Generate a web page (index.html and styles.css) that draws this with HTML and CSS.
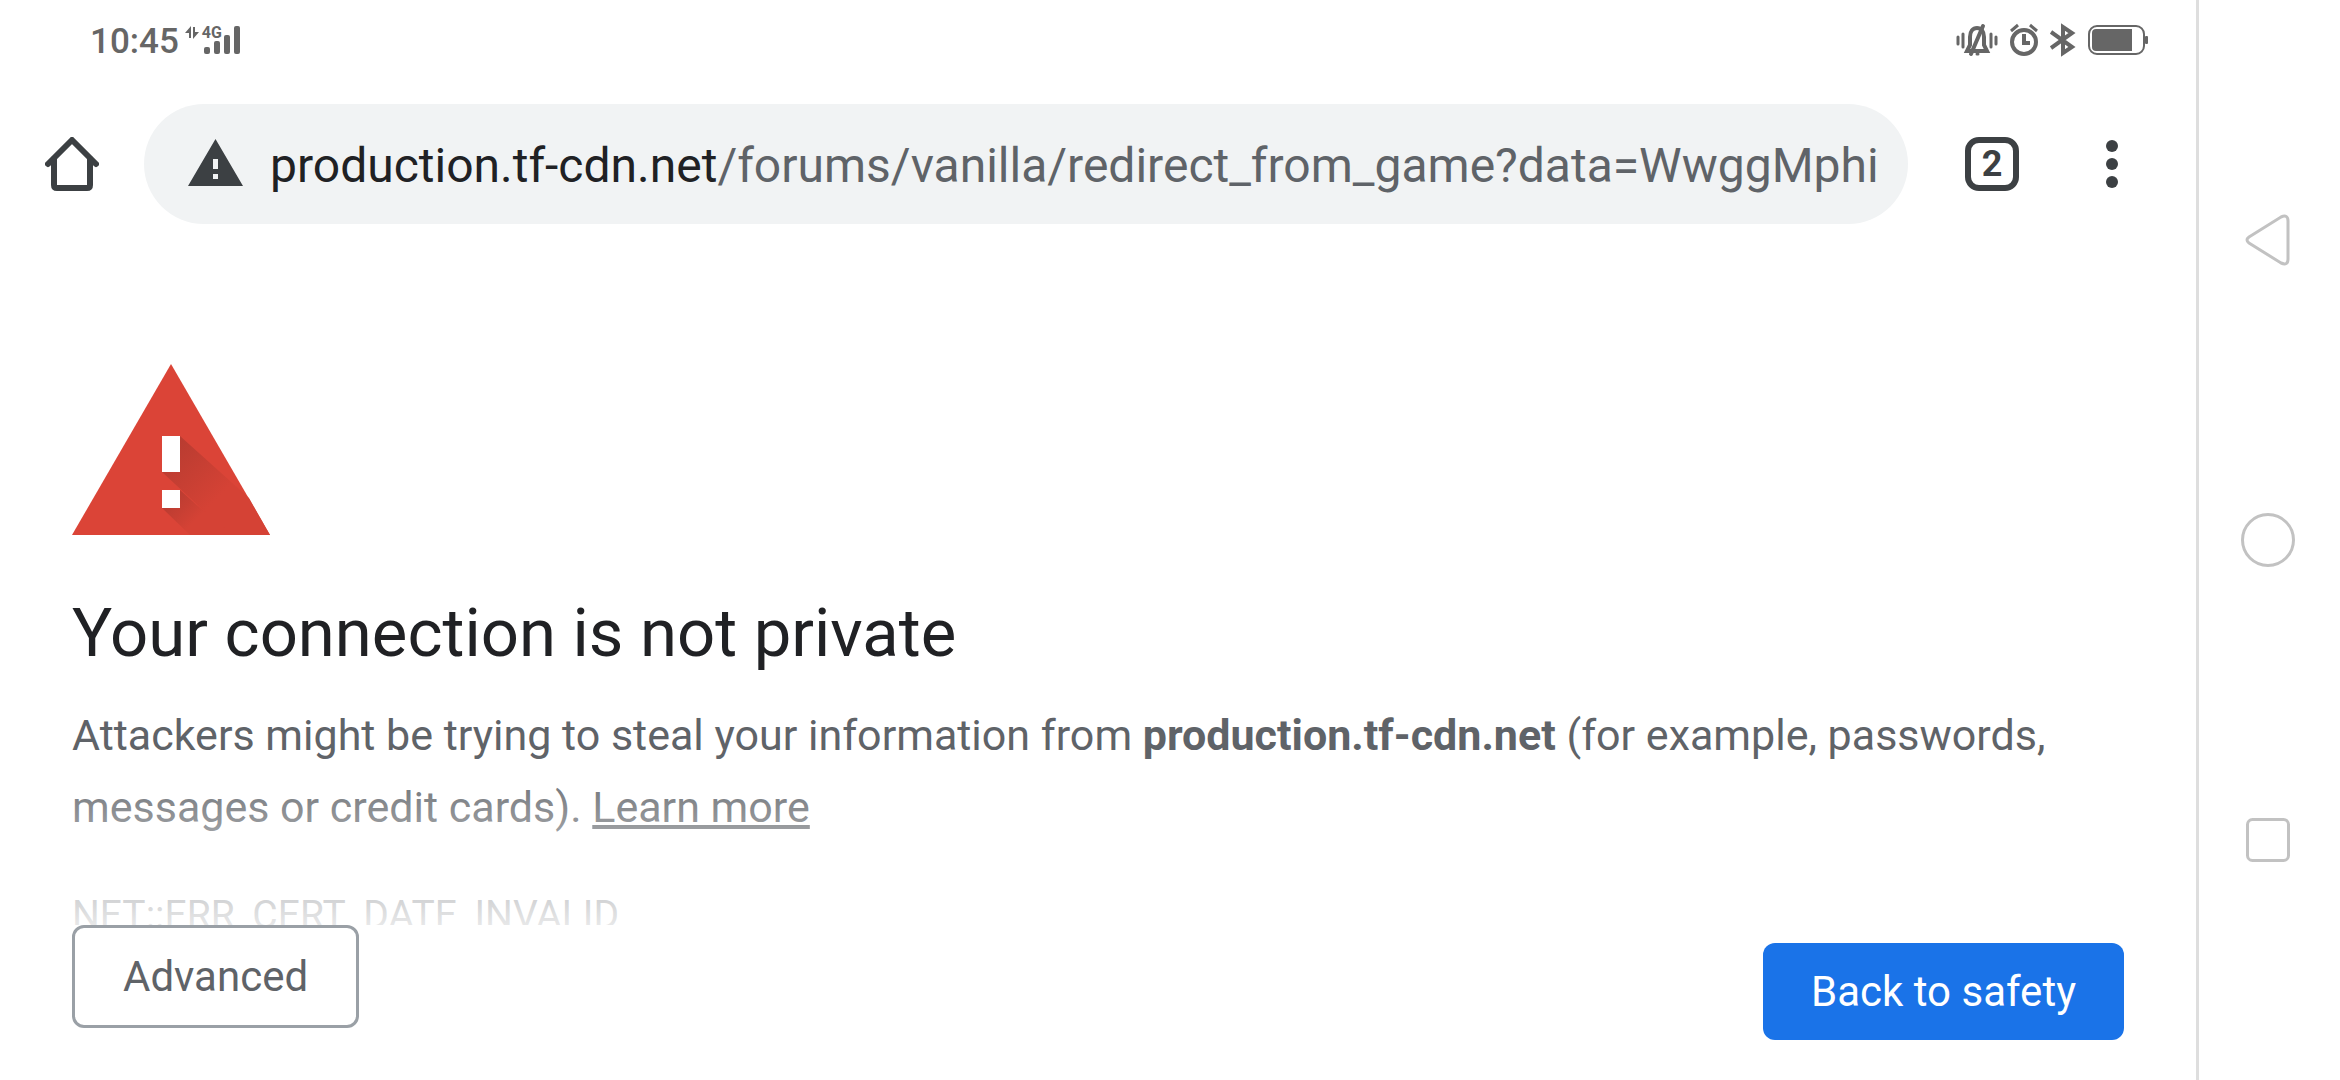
FILE: index.html
```html
<!DOCTYPE html>
<html lang="en">
<head>
<meta charset="utf-8">
<meta name="viewport" content="width=device-width, initial-scale=1">
<title>Privacy error</title>
<link rel="stylesheet" href="styles.css">
</head>
<body>
<div class="browser">
  <div class="status">
    <time class="clock">10:45</time>
    <div class="signal">
      <svg class="data-arrows" width="14" height="14" viewBox="0 0 14 14" aria-hidden="true"><path d="M6 0v12H4V7H0zM8 1h2v5h4l-6 7z"/></svg>
      <span class="network">4G</span>
      <svg class="bars" width="38" height="29" viewBox="0 0 38 29" aria-hidden="true"><rect x="1" y="21" width="6" height="7" rx="2"/><rect x="11" y="15" width="6" height="13" rx="2"/><rect x="21" y="9" width="6" height="19" rx="2"/><rect x="31" y="0" width="6" height="28" rx="2"/></svg>
    </div>
    <div class="status-icons">
      <svg width="42" height="36" viewBox="0 0 42 36" aria-hidden="true"><g fill="none" stroke="currentColor" stroke-width="3" stroke-linecap="round"><path d="M2 15v7M7 12v13M35 12v13M40 15v7"/><path stroke-width="4" stroke-linecap="butt" d="M11 29h20l-3-6v-8c0-6-3-9-7-9s-7 3-7 9v8z"/><path stroke-width="4" d="M27 4 15 32"/><path d="M21 32h1"/></g></svg>
      <svg width="28" height="34" viewBox="1 0 28 34" aria-hidden="true"><g fill="none" stroke="currentColor"><circle cx="15" cy="19" r="12" stroke-width="4"/><path stroke-width="4" d="M15 11v9h6"/><path stroke-width="3" d="m2 8 7-6M28 8l-7-6"/></g></svg>
      <svg width="26" height="34" viewBox="0 0 26 34" aria-hidden="true"><path d="m1 9 21 15-9 6V4l9 6L1 25" fill="none" stroke="currentColor" stroke-width="4"/></svg>
      <svg width="60" height="32" viewBox="0 0 60 32" aria-hidden="true"><rect x="1" y="2" width="55" height="28" rx="8" fill="none" stroke="currentColor" stroke-width="2"/><path d="M8 5h36v22H8q-4 0-4-4V9q0-4 4-4z"/><rect x="57" y="12" width="3" height="8" rx="1"/></svg>
    </div>
  </div>

  <header class="toolbar">
    <button class="icon-button" type="button" aria-label="Home">
      <svg width="54" height="54" viewBox="0 0 54 54" aria-hidden="true"><g fill="none" stroke="currentColor" stroke-width="6" stroke-linejoin="round" stroke-linecap="round"><path d="M3 27 27 3l24 24"/><path d="M9 22v26q0 3 3 3h30q3 0 3-3V22"/></g></svg>
    </button>
    <div class="omnibox">
      <svg class="omnibox-icon" width="55" height="47" viewBox="0 0 55 47" aria-hidden="true"><path fill-rule="evenodd" d="M27.500 0 55 47H0zM25 20v10h5V20zm0 15v5h5v-5z"/></svg>
      <div class="url" role="textbox" aria-label="Address bar" contenteditable="true" spellcheck="false"><span class="url-host">production.tf-cdn.net</span>/forums/vanilla/redirect_from_game?data=WwggMphi</div>
    </div>
    <button class="icon-button" type="button" aria-label="Open tabs"><span class="tab-count">2</span></button>
    <button class="icon-button" type="button" aria-label="Menu">
      <svg width="12" height="48" viewBox="0 0 12 48" aria-hidden="true"><circle cx="6" cy="6" r="6"/><circle cx="6" cy="24" r="6"/><circle cx="6" cy="42" r="6"/></svg>
    </button>
  </header>

  <main class="warning">
    <svg class="warning-icon" width="198" height="171" viewBox="0 0 198 171" role="img" aria-label="Warning">
      <defs>
        <linearGradient id="shade" gradientUnits="userSpaceOnUse" x1="92" y1="92" x2="140" y2="140"><stop offset="0" stop-color="#b93c31"/><stop offset="1" stop-color="#d54235"/></linearGradient>
        <linearGradient id="shade-dot" gradientUnits="userSpaceOnUse" x1="98" y1="134" x2="122" y2="158"><stop offset="0" stop-color="#b93c31"/><stop offset="1" stop-color="#d54235"/></linearGradient>
      </defs>
      <path fill="#db4437" d="M99 0l99 171H0z"/>
      <path fill="url(#shade)" d="M108 72l69 62 21 37h-40L90 108z"/>
      <path fill="#d54235" d="M125 140l35 31h-20z"/>
      <path fill="url(#shade-dot)" d="M108 126l50 45h-40l-28-27z"/>
      <path fill="#fff" d="M90 72h18v36H90zm0 54h18v18H90z"/>
    </svg>
    <h1 class="title">Your connection is not private</h1>
    <p class="message">Attackers might be trying to steal your information from <strong>production.tf-cdn.net</strong> (for example, passwords, messages or credit cards). <a class="learn-more" href="#learn-more">Learn more</a></p>
    <p class="error-code">NET::ERR_CERT_DATE_INVALID</p>
  </main>

  <div class="actions">
    <button class="button button-secondary" type="button">Advanced</button>
    <button class="button button-primary" type="button">Back to safety</button>
  </div>
</div>

<nav class="system-nav" aria-label="System navigation">
  <button class="nav-key" type="button" aria-label="Back"><svg width="54" height="54" viewBox="0 0 54 54" aria-hidden="true"><path d="M8 24 40 4q7-3 7 4v38q0 7-7 4L8 30q-4-3 0-6z"/></svg></button>
  <button class="nav-key" type="button" aria-label="Home screen"><svg width="54" height="54" viewBox="0 0 54 54" aria-hidden="true"><circle cx="27" cy="27" r="25.500"/></svg></button>
  <button class="nav-key" type="button" aria-label="Recent apps"><svg width="54" height="54" viewBox="0 0 54 54" aria-hidden="true"><rect x="6.500" y="6.500" width="41" height="41" rx="5"/></svg></button>
</nav>
</body>
</html>
```
FILE: styles.css
```css
* {
  box-sizing: border-box;
}

body {
  display: flex;
  height: 100vh;
  margin: 0;
  overflow: hidden;
  background: #fff;
  color: #5f6368;
  font-family: Roboto, "Liberation Sans", sans-serif;
}

button {
  margin: 0;
  border: 0;
  background: none;
  color: inherit;
  font: inherit;
}

svg {
  display: block;
  flex: none;
  fill: currentColor;
}

.browser {
  display: flex;
  flex: 1;
  flex-direction: column;
  min-width: 0;
}

/* Status bar */

.status {
  display: flex;
  align-items: center;
  height: 84px;
  padding: 0 48px 4px 90px;
  color: #666;
}

.clock {
  padding-top: 2px;
  font-size: 35px;
  font-weight: 500;
}

.signal {
  display: flex;
  align-items: flex-start;
  margin-left: 6px;
}

.network {
  margin-left: 3px;
  font-size: 16px;
  font-weight: 700;
  line-height: 14px;
}

.bars {
  margin-left: -19px;
}

.status-icons {
  display: flex;
  gap: 12px;
  align-items: center;
  margin-left: auto;
}

/* Toolbar */

.toolbar {
  display: flex;
  align-items: center;
  height: 160px;
  padding: 0 24px 0 12px;
  color: #3c4043;
}

.icon-button {
  display: flex;
  flex: none;
  align-items: center;
  justify-content: center;
  width: 120px;
  height: 120px;
  padding: 0;
}

.omnibox {
  display: flex;
  flex: 1;
  gap: 27px;
  align-items: center;
  height: 120px;
  min-width: 0;
  margin: 0 24px 0 12px;
  padding: 0 24px 0 44px;
  border-radius: 60px;
  background: #f1f3f4;
}

.omnibox-icon {
  margin-bottom: 4px;
}

.url {
  flex: 1;
  overflow: hidden;
  padding-top: 4px;
  color: #5f6368;
  font-size: 48px;
  line-height: 60px;
  white-space: nowrap;
}

.url-host {
  color: #202124;
}

.tab-count {
  width: 54px;
  height: 54px;
  border: 6px solid;
  border-radius: 14px;
  font-size: 36px;
  font-weight: 700;
  line-height: 42px;
}

/* Warning page */

.warning {
  flex: 1;
  min-height: 0;
  overflow: hidden;
  padding: 120px 72px 0;
}

.title {
  margin: 50px 0 18px;
  color: #202124;
  font-size: 67px;
  font-weight: 400;
  line-height: 96px;
}

.message,
.error-code {
  margin: 0;
  font-size: 43px;
  line-height: 72px;
}

.message strong {
  font-weight: 700;
}

.learn-more {
  color: inherit;
}

.error-code {
  margin-top: 36px;
  font-size: 39px;
}

.actions {
  position: relative;
  display: flex;
  justify-content: space-between;
  align-items: flex-start;
  padding: 0 72px 40px;
  background: #fff;
}

/* Fades the text out towards the buttons */
.actions::before {
  content: "";
  position: absolute;
  right: 0;
  bottom: 100%;
  left: 0;
  height: 170px;
  background: linear-gradient(rgba(255, 255, 255, 0), rgba(255, 255, 255, 0.85));
  pointer-events: none;
}

.button {
  padding: 0 48px;
  border-radius: 12px;
  font-size: 42px;
}

.button-secondary {
  height: 103px;
  border: 3px solid #9aa0a6;
}

.button-primary {
  height: 97px;
  margin-top: 18px;
  background: #1a73e8;
  color: #fff;
}

/* System navigation */

.system-nav {
  display: flex;
  flex: none;
  flex-direction: column;
  align-items: stretch;
  justify-content: center;
  width: 144px;
  padding-right: 3px;
  border-left: 3px solid #dedede;
}

.nav-key {
  display: flex;
  align-items: center;
  justify-content: center;
  height: 300px;
  padding: 0;
}

.nav-key svg {
  fill: none;
  stroke: #c2c2c2;
  stroke-width: 3;
}
```
